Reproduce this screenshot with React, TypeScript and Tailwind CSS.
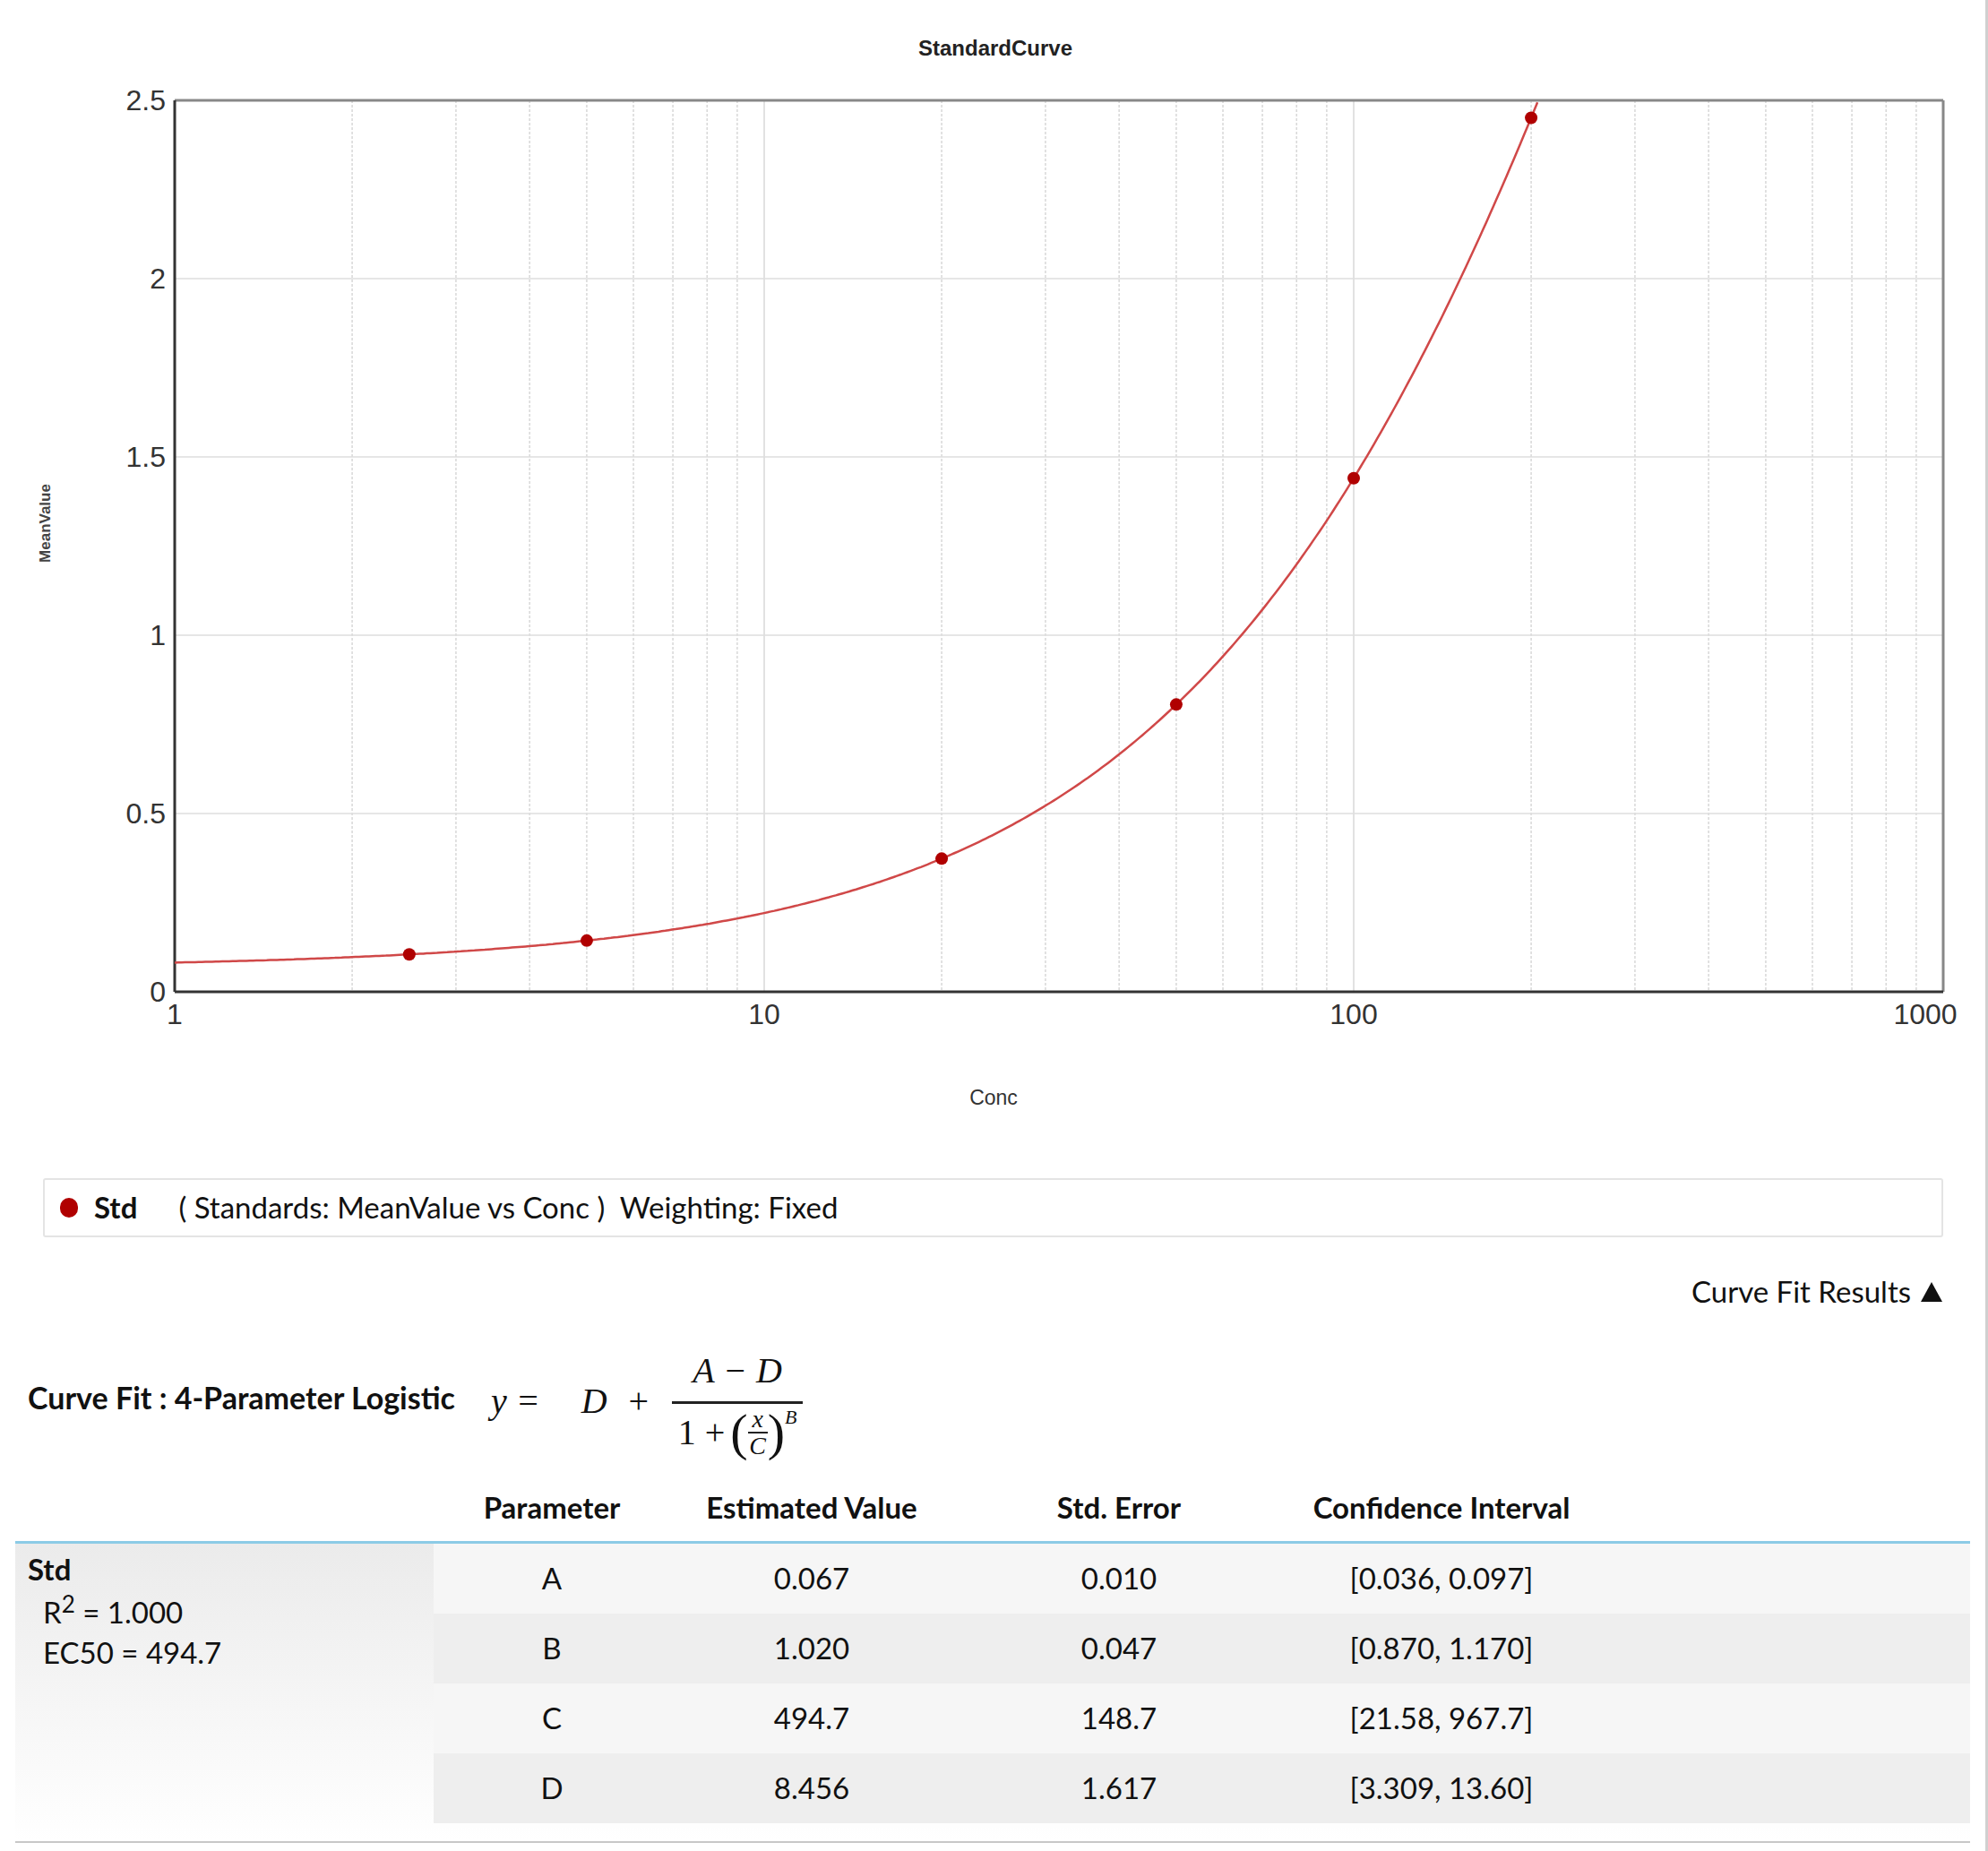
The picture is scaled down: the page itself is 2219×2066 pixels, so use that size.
import React from "react";

const X0 = 195, X1 = 2169, Y0 = 1107, Y1 = 112;
const dec = (X1 - X0) / 3;
const sx = (v: number) => X0 + Math.log10(v) * dec;
const sy = (v: number) => Y0 - (v / 2.5) * (Y0 - Y1);
const f = (x: number) => 8.456 + (0.067 - 8.456) / (1 + Math.pow(x / 494.7, 1.02));

function Chart() {
  const vlines: number[] = [];
  for (const k of [1, 10, 100]) for (let m = 2; m <= 9; m++) vlines.push(m * k);
  vlines.push(10, 100);
  const pts: string[] = [];
  for (let i = 0; i <= 400; i++) {
    const lx = (i / 400) * Math.log10(205);
    const x = Math.pow(10, lx);
    const y = f(x);
    if (y > 2.5) break;
    pts.push(`${sx(x).toFixed(1)},${sy(y).toFixed(1)}`);
  }
  const data = [2.5, 5, 20, 50, 100, 200];
  const fam = "'Liberation Sans', Arial, sans-serif";
  return (
    <svg width={2219} height={1300} className="block">
      <text x={1111} y={62} textAnchor="middle" fontFamily={fam} fontWeight="bold" fontSize={24} fill="#222">StandardCurve</text>
      {vlines.map((v, i) => (
        <line key={i} x1={sx(v)} x2={sx(v)} y1={Y1} y2={Y0} stroke="#d8d8d8" strokeWidth={1.5} strokeDasharray={v === 10 || v === 100 ? undefined : "3 2"} />
      ))}
      {[0.5, 1, 1.5, 2].map((v) => (
        <line key={v} x1={X0} x2={X1} y1={sy(v)} y2={sy(v)} stroke="#dedede" strokeWidth={1.5} />
      ))}
      <line x1={X0} x2={X1} y1={Y1} y2={Y1} stroke="#888" strokeWidth={3} />
      <line x1={X1} x2={X1} y1={Y1} y2={Y0} stroke="#888" strokeWidth={3} />
      <line x1={X0} x2={X0} y1={Y1} y2={Y0} stroke="#333" strokeWidth={3} />
      <line x1={X0} x2={X1} y1={Y0} y2={Y0} stroke="#333" strokeWidth={3} />
      {["0", "0.5", "1", "1.5", "2", "2.5"].map((t, i) => (
        <text key={t} x={185} y={sy(i * 0.5) + 11} textAnchor="end" fontFamily={fam} fontSize={32} fill="#333">{t}</text>
      ))}
      {["1", "10", "100", "1000"].map((t, i) => (
        <text key={t} x={X0 + i * dec - (i === 3 ? 20 : 0)} y={1143} textAnchor="middle" fontFamily={fam} fontSize={32} fill="#333">{t}</text>
      ))}
      <text x={1109} y={1233} textAnchor="middle" fontFamily={fam} fontSize={23} fill="#333">Conc</text>
      <text x={0} y={0} transform="translate(56,584) rotate(-90)" textAnchor="middle" fontFamily={fam} fontWeight="bold" fontSize={17} fill="#444">MeanValue</text>
      <polyline points={pts.join(" ")} fill="none" stroke="#d04848" strokeWidth={2.5} />
      {data.map((d) => (
        <circle key={d} cx={sx(d)} cy={sy(f(d))} r={7} fill="#b00000" />
      ))}
    </svg>
  );
}

const rows = [
  ["A", "0.067", "0.010", "[0.036, 0.097]"],
  ["B", "1.020", "0.047", "[0.870, 1.170]"],
  ["C", "494.7", "148.7", "[21.58, 967.7]"],
  ["D", "8.456", "1.617", "[3.309, 13.60]"],
];
const cols = "grid-cols-[467px_264px_316px_370px_350px_1fr]";

export default function App() {
  const serif = { fontFamily: "'Liberation Serif', 'DejaVu Serif', serif" };
  return (
    <div className="relative w-[2219px] h-[2066px] bg-white text-[#111] border-r-[3px] border-[#d0d0d0]" style={{ fontFamily: "Lato, 'Open Sans', sans-serif" }}>
      <Chart />
      <div className="mt-[15px] ml-[48px] w-[2121px] h-[66px] border-2 border-[#e4e4e4] rounded-[3px] flex items-center text-[33px]">
        <span className="ml-[17px] w-[20px] h-[22px] rounded-full bg-[#b00000]" />
        <span className="ml-[18px] font-bold">Std</span>
        <span className="ml-[46px]">( Standards: MeanValue vs Conc )&nbsp; Weighting: Fixed</span>
      </div>
      <div className="mt-[41px] h-[40px] flex justify-end items-center pr-[47px] text-[33px]">
        Curve Fit Results
        <svg width="26" height="24" className="ml-[10px]"><polygon points="13,1 25,23 1,23" fill="#111" /></svg>
      </div>
      <div className="mt-[38px] h-[134px] flex items-center pl-[31px]">
        <span className="font-bold text-[34px] -mt-[16px]">Curve Fit : 4-Parameter Logistic</span>
        <div className="ml-[40px] flex items-center italic text-[40px] -mt-[6px]" style={serif}>
          <span>y =</span>
          <span className="ml-[46px]">D</span>
          <span className="ml-[24px] not-italic">+</span>
          <div className="ml-[26px] flex flex-col items-center">
            <span className="px-[18px] pb-[4px]">A − D</span>
            <span className="w-[146px] h-[3px] bg-[#222]" />
            <span className="flex items-center pt-[2px] not-italic">
              1 +
              <span className="text-[58px] ml-[6px] leading-none">(</span>
              <span className="flex flex-col items-center italic text-[28px] leading-[28px]">
                <span>x</span>
                <span className="w-[22px] h-[2px] bg-[#222]" />
                <span>C</span>
              </span>
              <span className="text-[58px] leading-none">)</span>
              <span className="italic text-[22px] self-start -mt-[4px]">B</span>
            </span>
          </div>
        </div>
      </div>
      <div className="mx-[17px] mt-[12px]">
        <div className={`grid ${cols} h-[74px] items-center font-bold text-[33px] text-center`}>
          <div />
          <div>Parameter</div>
          <div>Estimated Value</div>
          <div>Std. Error</div>
          <div>Confidence Interval</div>
          <div />
        </div>
        <div className="h-[3px] bg-[#8ccbe6]" />
        <div className="flex border-b-2 border-[#c8c8c8] pb-[20px] bg-gradient-to-b from-[#ebebeb] to-white w-full">
          <div className="w-[467px] shrink-0 text-[33px] pl-[14px] pt-[4px]">
            <div className="font-bold">Std</div>
            <div className="pl-[17px] -mt-[2px]">R<sup className="text-[26px] relative -top-[12px]">2</sup> = 1.000</div>
            <div className="pl-[17px] -mt-[4px]">EC50 = 494.7</div>
          </div>
          <div className="flex-1 bg-white">
            {rows.map((r, i) => (
              <div key={r[0]} className={`grid grid-cols-[264px_316px_370px_350px_1fr] h-[78px] items-center text-center text-[33px] ${i % 2 === 0 ? "bg-[#f6f6f6]" : "bg-[#eeeeee]"}`}>
                <div>{r[0]}</div>
                <div>{r[1]}</div>
                <div>{r[2]}</div>
                <div>{r[3]}</div>
                <div />
              </div>
            ))}
          </div>
        </div>
      </div>
    </div>
  );
}
